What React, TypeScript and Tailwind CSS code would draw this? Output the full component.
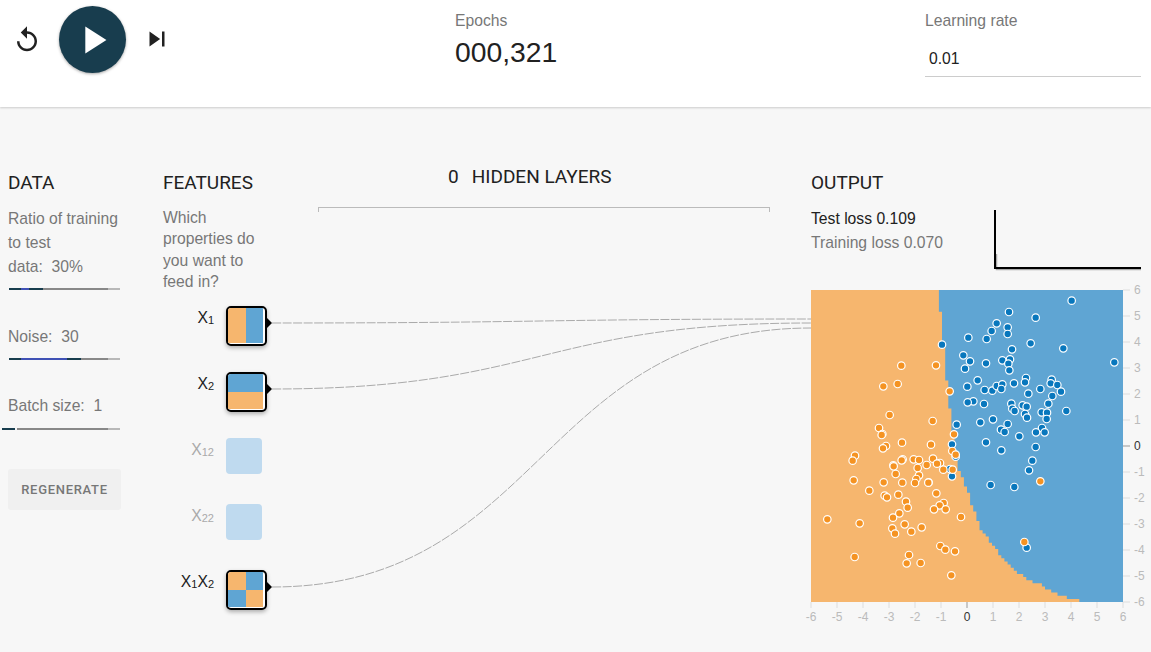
const CELL = 3.12;

// decision boundary, [y, x] inside the 312px heatmap
const boundary: [number, number][] = [
  [0, 127.7], [34, 130.5], [68, 134], [110, 137.3], [122, 140], [153, 143], [177, 147], [187, 152],
  [197, 155.7], [207, 159], [217, 162], [225, 166], [237, 169], [243, 174], [253, 180.7], [263, 189],
  [273, 197], [280, 205.7], [287, 215.7], [293, 229], [300, 240.7], [306, 255.7], [309, 268], [312, 272],
];

function boundaryX(y: number) {
  for (let i = 1; i < boundary.length; i++) {
    const [y0, x0] = boundary[i - 1];
    const [y1, x1] = boundary[i];
    if (y <= y1) return x0 + ((y - y0) / (y1 - y0)) * (x1 - x0);
  }
  return 272;
}

function buildRegion() {
  let d = "M320 -8L127 -8";
  for (let j = 0; j < 100; j++) {
    const x = Math.round(boundaryX(j * CELL) / CELL) * CELL;
    d += `L${x.toFixed(1)} ${(j * CELL).toFixed(1)}L${x.toFixed(1)} ${((j + 1) * CELL).toFixed(1)}`;
  }
  return d + "L272 320L320 320Z";
}

const region = buildRegion();

const upper = (pts: number[][]) => pts.map(([x, y]) => [x / 3 - 11, y / 3 - 120]);
const lower = (pts: number[][]) => pts.map(([x, y]) => [x / 3 - 11, y / 3 + 110]);

const bluePoints = [
  ...upper([
    [815, 392], [627, 426], [707, 443], [590, 460], [623, 472], [623, 492], [575, 483], [505, 503], [560, 507],
    [692, 520], [426, 524], [636, 538], [790, 535], [490, 556], [510, 574], [558, 580], [607, 571], [630, 568],
    [625, 581], [495, 596], [628, 601], [943, 577], [533, 631], [502, 650], [554, 660], [577, 662], [590, 648],
    [607, 643], [604, 657], [642, 640], [678, 624], [675, 637], [755, 629], [752, 640], [772, 645], [783, 665],
    [721, 657], [685, 671], [757, 678], [520, 694], [503, 697], [552, 702], [634, 701], [745, 701],
  ]),
  ...lower([
    [668, 16], [680, 20], [637, 26], [644, 33], [675, 42], [681, 53], [725, 37], [741, 38], [740, 57], [799, 33],
    [470, 74], [541, 67], [579, 58], [623, 72], [603, 89], [614, 96], [726, 84], [708, 97], [734, 97], [658, 109],
    [558, 127], [456, 133], [604, 151], [707, 141], [467, 170], [697, 182], [687, 211], [450, 207], [456, 229],
    [572, 255], [643, 261], [680, 443],
  ]),
];

const orangePoints = [
  ...upper([[304, 587], [408, 586], [250, 649], [293, 642], [449, 664]]),
  ...lower([
    [269, 45], [398, 63], [237, 84], [247, 102], [245, 105], [462, 103], [306, 128], [393, 134], [258, 138], [249, 145],
    [457, 153], [467, 164], [165, 167], [158, 182], [308, 178], [305, 181], [341, 178], [357, 180], [399, 176], [420, 189],
    [411, 191], [380, 195], [280, 196], [281, 199], [353, 204], [430, 209], [458, 209], [287, 222], [357, 226], [349, 237],
    [161, 241], [251, 247], [307, 248], [345, 249], [386, 247], [385, 248], [721, 244], [208, 272], [409, 280], [295, 284],
    [254, 287], [261, 292], [318, 305], [431, 309], [419, 316], [323, 323], [402, 328], [437, 328], [298, 340], [483, 351],
    [279, 353], [82, 358], [179, 370], [314, 373], [277, 385], [365, 382], [334, 395], [285, 401], [421, 438], [436, 449],
    [465, 454], [673, 426], [327, 465], [164, 471], [320, 490], [362, 489], [454, 526],
  ]),
];

const ticks = [-6, -5, -4, -3, -2, -1, 0, 1, 2, 3, 4, 5, 6];

function Slider({ children, className = "" }: { children: React.ReactNode; className?: string }) {
  return <div className={`flex h-[2px] ${className}`}>{children}</div>;
}

function Heatmap() {
  return (
    <svg width="340" height="346" className="block overflow-visible">
      <svg width="312" height="312">
        <rect width="312" height="312" fill="#f6b66e" />
        <path d={region} fill="#5fa5d3" className="blur-[0.5px]" />
      </svg>
      {ticks.map((t) => {
        const p = (t + 6) * 26;
        const zero = t === 0;
        return (
          <g key={t} fontSize="12" fill={zero ? "#333" : "#bbb"}>
            <line x1={312} x2={319} y1={312 - p} y2={312 - p} stroke={zero ? "#999" : "#ddd"} />
            <text x={323} y={316 - p}>{t}</text>
            <line x1={p} x2={p} y1={312} y2={318} stroke={zero ? "#999" : "#ddd"} />
            <text x={p} y={331} textAnchor="middle">{t}</text>
          </g>
        );
      })}
      {bluePoints.map(([x, y], i) => (
        <circle key={"b" + i} cx={x} cy={y} r="3.75" fill="#0877bd" stroke="#fff" strokeWidth="1.2" />
      ))}
      {orangePoints.map(([x, y], i) => (
        <circle key={"o" + i} cx={x} cy={y} r="3.75" fill="#f59322" stroke="#fff" strokeWidth="1.2" />
      ))}
    </svg>
  );
}

function ActiveNode({ children }: { children: React.ReactNode }) {
  return (
    <div className="relative">
      <div className="h-[40px] w-[41px] overflow-hidden rounded-[5px] border-[2.5px] border-black bg-white shadow-[0_2px_4px_rgba(0,0,0,0.3)]">
        <div className="h-[35px] w-[35px]">{children}</div>
      </div>
      <div className="absolute left-full top-[12px] h-0 w-0 border-y-[5px] border-l-[5px] border-y-transparent border-l-black" />
    </div>
  );
}

function InactiveNode() {
  return <div className="h-[36px] w-[36px] rounded-[4px] bg-[#bfdaef]" />;
}

function Links() {
  const links = [
    [323, 319],
    [389, 323],
    [587, 328],
  ];
  return (
    <svg className="absolute left-0 top-0 pointer-events-none" width="1151" height="545" viewBox="0 107 1151 545">
      {links.map(([a, b]) => (
        <path key={a} d={`M272 ${a}C541 ${a} 541 ${b} 811 ${b}`} fill="none" stroke="#aaa" strokeDasharray="9 1.5" />
      ))}
    </svg>
  );
}

export default function App() {
  return (
    <div className="h-[652px] w-[1151px] overflow-hidden bg-[#f7f7f7] font-['Liberation_Sans',sans-serif] text-[15.7px] text-[#777]">
      <header className="relative z-10 flex h-[107px] items-start bg-white pl-[12px] shadow-[0_1px_2px_rgba(0,0,0,0.18)]">
        <svg className="mt-[25px]" width="30" height="30" viewBox="0 0 24 24" fill="#212121">
          <path d="M12 5V1L7 6l5 5V7c3.31 0 6 2.69 6 6s-2.69 6-6 6-6-2.69-6-6H4c0 4.42 3.58 8 8 8s8-3.58 8-8-3.58-8-8-8z" />
        </svg>
        <button className="ml-[17px] mt-[6px] flex h-[67px] w-[67px] items-center justify-center rounded-full bg-[#183d4e] shadow-[0_1px_3px_rgba(0,0,0,0.35)]">
          <svg width="46" height="46" viewBox="0 0 24 24" fill="#fff">
            <path d="M8 5v14l11-7z" />
          </svg>
        </button>
        <svg className="ml-[16px] mt-[24px]" width="30" height="30" viewBox="0 0 24 24" fill="#212121">
          <path d="M6 18l8.5-6L6 6v12zM16 6v12h2V6h-2z" />
        </svg>
        <div className="ml-[283px] mt-[9px] w-[470px]">
          <div className="leading-[24px]">Epochs</div>
          <div className="mt-[1px] text-[28.3px] leading-[36px] text-[#212121]">000,321</div>
        </div>
        <div className="mt-[9px] w-[216px]">
          <div className="leading-[24px]">Learning rate</div>
          <div className="mt-[5px] h-[39px] border-b border-[#ccc] pl-[4px] pt-[9px] leading-[24px] text-[#212121]">0.01</div>
        </div>
      </header>

      <main className="relative flex pt-[64px]">
        <Links />

        <section className="w-[163px] pl-[8px]">
          <h4 className="font-['Roboto',sans-serif] text-[19px] leading-[24px] text-[#212121]">DATA</h4>
          <p className="mt-[12px] leading-[24px]">Ratio of training<br />to test<br />data:&nbsp; 30%</p>
          <Slider className="ml-[1px] mt-[9px] w-[111px]">
            <div className="w-[12px] bg-[#183d4e]" />
            <div className="w-[8px] bg-[#3f51b5]" />
            <div className="w-[14px] bg-[#183d4e]" />
            <div className="w-[65px] bg-[#888]" />
            <div className="w-[12px] bg-[#b8b8b8]" />
          </Slider>
          <p className="mt-[35px] leading-[24px]">Noise:&nbsp; 30</p>
          <Slider className="ml-[1px] mt-[9px] w-[111px]">
            <div className="w-[12px] bg-[#183d4e]" />
            <div className="w-[46px] bg-[#3f51b5]" />
            <div className="w-[14px] bg-[#183d4e]" />
            <div className="w-[27px] bg-[#888]" />
            <div className="w-[12px] bg-[#b8b8b8]" />
          </Slider>
          <p className="mt-[34px] leading-[24px]">Batch size:&nbsp; 1</p>
          <Slider className="-ml-[6px] mt-[10px] w-[118px]">
            <div className="w-[13px] bg-[#183d4e]" />
            <div className="ml-[2px] w-[91px] bg-[#888]" />
            <div className="w-[12px] bg-[#b8b8b8]" />
          </Slider>
          <button className="mt-[39px] h-[41px] w-[113px] rounded-[3px] bg-[#f0f0f0] font-['Roboto',sans-serif] text-[13px] font-medium tracking-[0.7px] text-[#777]">
            REGENERATE
          </button>
        </section>

        <section className="w-[155px]">
          <h4 className="font-['Roboto',sans-serif] text-[19px] leading-[24px] text-[#212121]">FEATURES</h4>
          <p className="mt-[12px] h-[85px] w-[100px] leading-[21.3px]">Which properties do you want to feed in?</p>
          <div className="mt-[14px]">
            <div className="flex h-[66px] items-start">
              <div className="w-[51px] text-right leading-[24px] text-[#212121]">X<sub className="-bottom-[1px] text-[11px]">1</sub></div>
              <div className="ml-[12px]">
                <ActiveNode>
                  <div className="flex h-full">
                    <div className="flex-1 bg-[#f6b66e]" />
                    <div className="flex-1 bg-[#5fa5d3]" />
                  </div>
                </ActiveNode>
              </div>
            </div>
            <div className="flex h-[66px] items-start">
              <div className="w-[51px] text-right leading-[24px] text-[#212121]">X<sub className="-bottom-[1px] text-[11px]">2</sub></div>
              <div className="ml-[12px]">
                <ActiveNode>
                  <div className="flex h-full flex-col">
                    <div className="flex-1 bg-[#5fa5d3]" />
                    <div className="flex-1 bg-[#f6b66e]" />
                  </div>
                </ActiveNode>
              </div>
            </div>
            <div className="flex h-[66px] items-start">
              <div className="w-[51px] text-right leading-[24px] text-[#aaa]">X<sub className="-bottom-[1px] text-[11px]">12</sub></div>
              <div className="ml-[12px]"><InactiveNode /></div>
            </div>
            <div className="flex h-[66px] items-start">
              <div className="w-[51px] text-right leading-[24px] text-[#aaa]">X<sub className="-bottom-[1px] text-[11px]">22</sub></div>
              <div className="ml-[12px]"><InactiveNode /></div>
            </div>
            <div className="flex h-[40px] items-start">
              <div className="w-[51px] whitespace-nowrap text-right leading-[24px] text-[#212121]">
                X<sub className="-bottom-[1px] text-[11px]">1</sub>X<sub className="-bottom-[1px] text-[11px]">2</sub>
              </div>
              <div className="ml-[12px]">
                <ActiveNode>
                  <div className="grid h-full grid-cols-2 grid-rows-2">
                    <div className="bg-[#f6b66e]" />
                    <div className="bg-[#5fa5d3]" />
                    <div className="bg-[#5fa5d3]" />
                    <div className="bg-[#f6b66e]" />
                  </div>
                </ActiveNode>
              </div>
            </div>
          </div>
        </section>

        <section className="w-[452px] -mt-[6px]">
          <div className="pl-[130px] font-['Roboto',sans-serif] text-[19px] leading-[24px] text-[#212121]">
            0<span className="ml-[13px]">HIDDEN LAYERS</span>
          </div>
          <div className="mt-[18px] h-[5px] border-x border-t border-[#bbb]" />
        </section>

        <section className="ml-[41px] w-[340px]">
          <h4 className="font-['Roboto',sans-serif] text-[19px] leading-[24px] text-[#212121]">OUTPUT</h4>
          <div className="mt-[12px] flex h-[83px] items-start">
            <div className="w-[183px] leading-[24px]">
              <div className="text-[#212121]">Test loss 0.109</div>
              <div>Training loss 0.070</div>
            </div>
            <svg className="mt-[3px]" width="147" height="62">
              <path d="M2.5 44V59.5H147" fill="none" stroke="#aaa" strokeWidth="1.5" />
              <path d="M1 0V58H147" fill="none" stroke="#000" strokeWidth="2" />
            </svg>
          </div>
          <Heatmap />
        </section>
      </main>
    </div>
  );
}
